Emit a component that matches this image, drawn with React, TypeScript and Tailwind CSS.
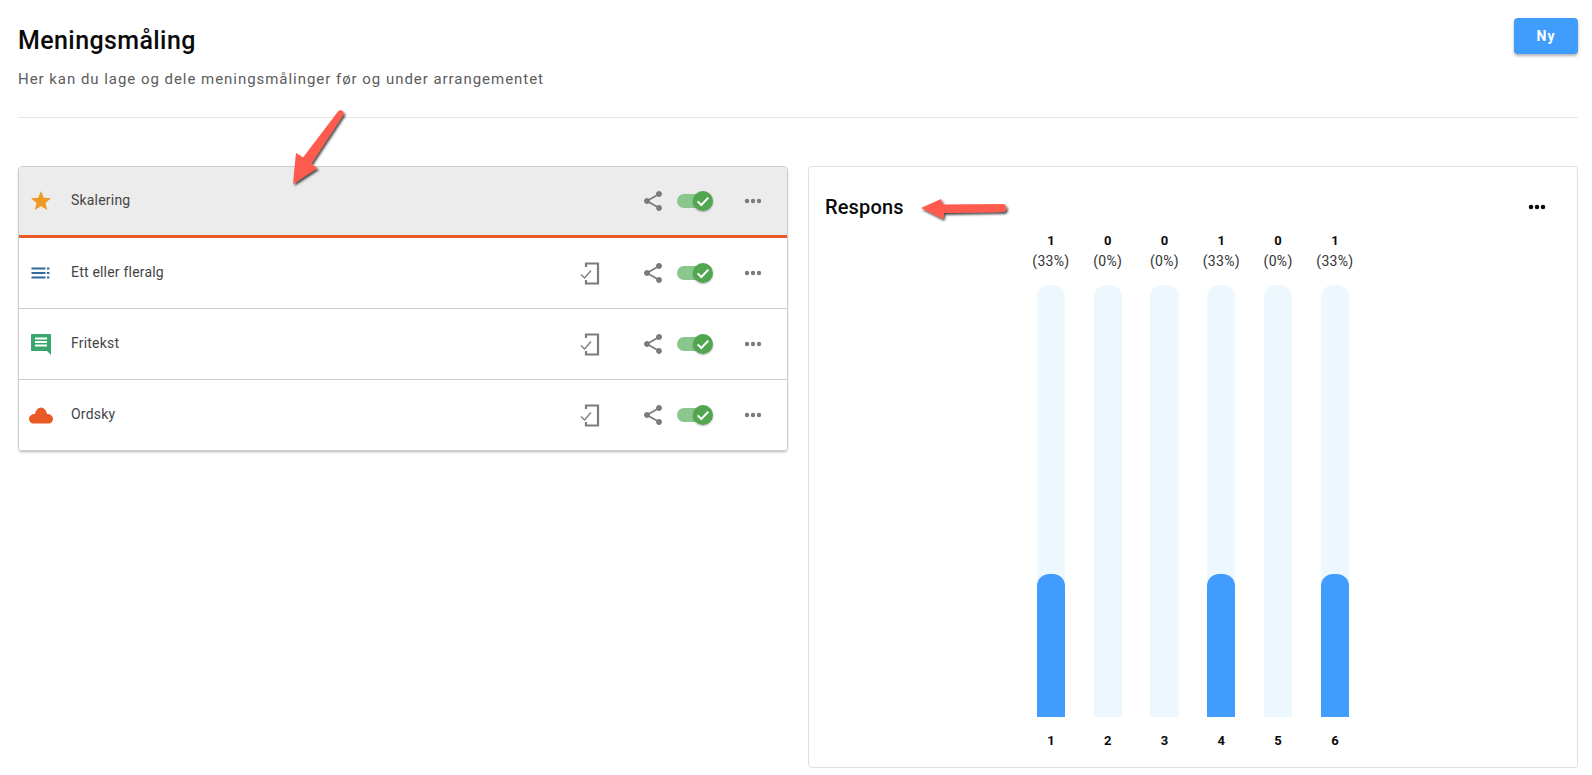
import React from "react";

const share = "M18 16.08c-.76 0-1.44.3-1.96.77L8.91 12.7c.05-.23.09-.46.09-.7s-.04-.47-.09-.7l7.05-4.11c.54.5 1.25.81 2.04.81 1.66 0 3-1.34 3-3s-1.34-3-3-3-3 1.34-3 3c0 .24.04.47.09.7L8.04 9.81C7.5 9.31 6.79 9 6 9c-1.66 0-3 1.34-3 3s1.34 3 3 3c.79 0 1.5-.31 2.04-.81l7.12 4.16c-.05.21-.08.43-.08.65 0 1.61 1.31 2.92 2.92 2.92 1.61 0 2.92-1.31 2.92-2.92s-1.31-2.92-2.92-2.92z";

function Star() {
  return (
    <svg width="24" height="24" viewBox="0 0 24 24" fill="#ee9a27">
      <path d="M12 17.27L18.18 21l-1.64-7.03L22 9.24l-7.19-.61L12 2 9.19 8.63 2 9.24l5.46 4.73L5.82 21z" />
    </svg>
  );
}
function ListIcon() {
  return (
    <svg width="24" height="24" viewBox="0 0 24 24" fill="#2f6a9e">
      <rect x="2.500" y="6.500" width="14" height="2" />
      <rect x="2.500" y="11" width="14" height="2" />
      <rect x="2.500" y="15.500" width="14" height="2" />
      <rect x="18" y="6.500" width="2.400" height="2" />
      <rect x="18" y="11" width="2.400" height="2" />
      <rect x="18" y="15.500" width="2.400" height="2" />
    </svg>
  );
}
function ChatIcon() {
  return (
    <svg width="24" height="24" viewBox="0 0 24 24">
      <path fill="#3aa76d" d="M3 2h18c.6 0 1 .4 1 1V23l-4-4H3c-.6 0-1-.4-1-1V3c0-.6.4-1 1-1z" />
      <rect x="6" y="5.500" width="12" height="2" fill="#fff" />
      <rect x="6" y="9" width="12" height="2" fill="#fff" />
      <rect x="6" y="12.500" width="12" height="2" fill="#fff" />
    </svg>
  );
}
function Cloud() {
  return (
    <svg width="24" height="24" viewBox="0 0 24 24" fill="#e95a27">
      <path d="M18 11C17.500 7.500 15 4.500 12 4.500S6.500 7.500 6 11C2.500 11 0 13 0 16c0 2.500 2 4.500 4.500 4.500h15c2.500 0 4.500-2 4.500-4.500 0-3-2.500-5-6-5z" />
    </svg>
  );
}
function PhoneCheck() {
  return (
    <svg width="24" height="24" viewBox="0 0 24 24" fill="none" stroke="#7b7b7b">
      <path strokeWidth="2.200" d="M8 6V2.500h12v20H8V19" />
      <path strokeWidth="1.300" d="M3 13.500l3.500 3.500L13 9.500" />
    </svg>
  );
}
function ShareIcon({ color = "#7b7b7b" }: { color?: string }) {
  return (
    <svg width="24" height="24" viewBox="0 0 24 24" fill={color}>
      <path d={share} />
    </svg>
  );
}
function Toggle() {
  return (
    <div className="relative h-[14px] w-[28px] rounded-full bg-[#8ac78c]">
      <div className="absolute left-[16px] top-[-3px] flex h-[20px] w-[20px] items-center justify-center rounded-full bg-[#51a64f] shadow-[0_1px_2px_rgba(0,0,0,0.3)]">
        <svg width="16" height="16" viewBox="0 0 24 24" fill="none" stroke="#fff" strokeWidth="3">
          <path d="M4 12.500l5.500 5.500L20 7" />
        </svg>
      </div>
    </div>
  );
}

function Row({ icon, label, phone, active }: { icon: React.ReactNode; label: string; phone?: boolean; active?: boolean }) {
  return (
    <div
      className={
        active
          ? "flex h-[71px] items-center border-b-[3px] border-[#e95a27] bg-[#ececec] pr-[26px]"
          : "flex h-[71px] items-center border-b border-[#cccccc] pb-[1px] pr-[26px]"
      }
    >
      <div className="mr-[8px] flex w-[44px] justify-center">{icon}</div>
      <span className="mb-[2px] text-[14px] leading-none tracking-[0.2px] text-[#454545]">{label}</span>
      <div className="ml-auto flex items-center">
        {phone && <div className="mr-[39px]"><PhoneCheck /></div>}
        <div className="mr-[12px]"><ShareIcon /></div>
        <div className="mr-[39px]"><Toggle /></div>
        <div className="h-[24px] w-[17px]">
          <svg width="18" height="24" viewBox="0 0 24 32" fill="#7b7b7b">
            <circle cx="4" cy="16" r="2.900" />
            <circle cx="12" cy="16" r="2.900" />
            <circle cx="20" cy="16" r="2.900" />
          </svg>
        </div>
      </div>
    </div>
  );
}

const data = [
  { n: 1, v: 1, p: "(33%)" },
  { n: 2, v: 0, p: "(0%)" },
  { n: 3, v: 0, p: "(0%)" },
  { n: 4, v: 1, p: "(33%)" },
  { n: 5, v: 0, p: "(0%)" },
  { n: 6, v: 1, p: "(33%)" },
];

export default function App() {
  return (
    <div className="relative min-h-[775px] bg-white pl-[18px] pr-[14px] font-['Roboto',sans-serif]">
      <header className="flex h-[118px] items-start justify-between border-b border-[#e4e4e4]">
        <div className="pt-[24px]">
          <h1 className="text-[25px] font-medium leading-[34px] tracking-[0.4px] text-[#0a0a0a]">Meningsmåling</h1>
          <p className="mt-[11px] text-[15px] leading-[20px] tracking-[0.96px] text-[#5c5c5c]">
            Her kan du lage og dele meningsmålinger før og under arrangementet
          </p>
        </div>
        <button className="mt-[18px] h-[36px] w-[64px] rounded-[4px] bg-[#409cfd] text-[14px] font-bold tracking-[1px] text-white shadow-[0_2px_3px_rgba(0,0,0,0.3)]">
          Ny
        </button>
      </header>

      <div className="mt-[48px] flex items-start gap-[20px]">
        <section className="w-[770px] overflow-hidden rounded-[4px] border border-[#cccccc] shadow-[0_1px_2px_rgba(0,0,0,0.15)]">
          <Row active icon={<Star />} label="Skalering" />
          <Row icon={<ListIcon />} label="Ett eller fleralg" phone />
          <Row icon={<ChatIcon />} label="Fritekst" phone />
          <Row icon={<Cloud />} label="Ordsky" phone />
        </section>

        <section className="h-[602px] w-[770px] rounded-[4px] border border-[#e0e0e0] pl-[16px] pr-[31px]">
          <div className="flex items-center justify-between pt-[28px]">
            <h2 className="text-[20px] font-medium leading-[24px] tracking-[0.15px] text-[#0a0a0a]">Respons</h2>
            <svg width="18" height="24" viewBox="0 0 24 32" fill="#0a0a0a">
              <circle cx="4" cy="16" r="3" />
              <circle cx="12" cy="16" r="3" />
              <circle cx="20" cy="16" r="3" />
            </svg>
          </div>
          <div className="ml-[197.500px] mt-[12px] grid w-[340.800px] grid-cols-6">
            {data.map((d) => (
              <div key={d.n} className="flex flex-col items-center">
                <div className="text-[13px] font-bold leading-[20px] text-[#0a0a0a]">{d.v}</div>
                <div className="text-[14px] leading-[20px] tracking-[0.3px] text-[#333333]">{d.p}</div>
                <div className="mt-[14px] flex h-[432px] w-[28.400px] flex-col justify-end overflow-hidden rounded-t-[12px] bg-[#ecf7fe]">
                  {d.v > 0 && <div className="h-[143px] rounded-t-[12px] bg-[#409cfd]" />}
                </div>
                <div className="mt-[14px] text-[13px] font-bold leading-[20px] text-[#0a0a0a]">{d.n}</div>
              </div>
            ))}
          </div>
        </section>
      </div>

      <svg className="pointer-events-none absolute left-[285px] top-[100px]" width="70" height="95" viewBox="0 0 70 95">
        <defs>
          <filter id="s" x="-30%" y="-30%" width="160%" height="160%">
            <feDropShadow dx="1.500" dy="2" stdDeviation="1.200" floodColor="#000" floodOpacity="0.7" />
          </filter>
        </defs>
        <path filter="url(#s)" fill="#fe5a4e" d="M53 11.500c2-3 7-.5 5.500 3L26 64l6.500 4L8 84l3-31 7 4.500z" />
      </svg>
      <svg className="pointer-events-none absolute left-[915px] top-[192px]" width="100" height="30" viewBox="0 0 100 30">
        <path filter="url(#s)" fill="#fe5a4e" d="M6 16 26 7l2 5.500 60-.5c4.500 0 4.500 8 0 8l-59 1-1 6z" />
      </svg>
    </div>
  );
}
